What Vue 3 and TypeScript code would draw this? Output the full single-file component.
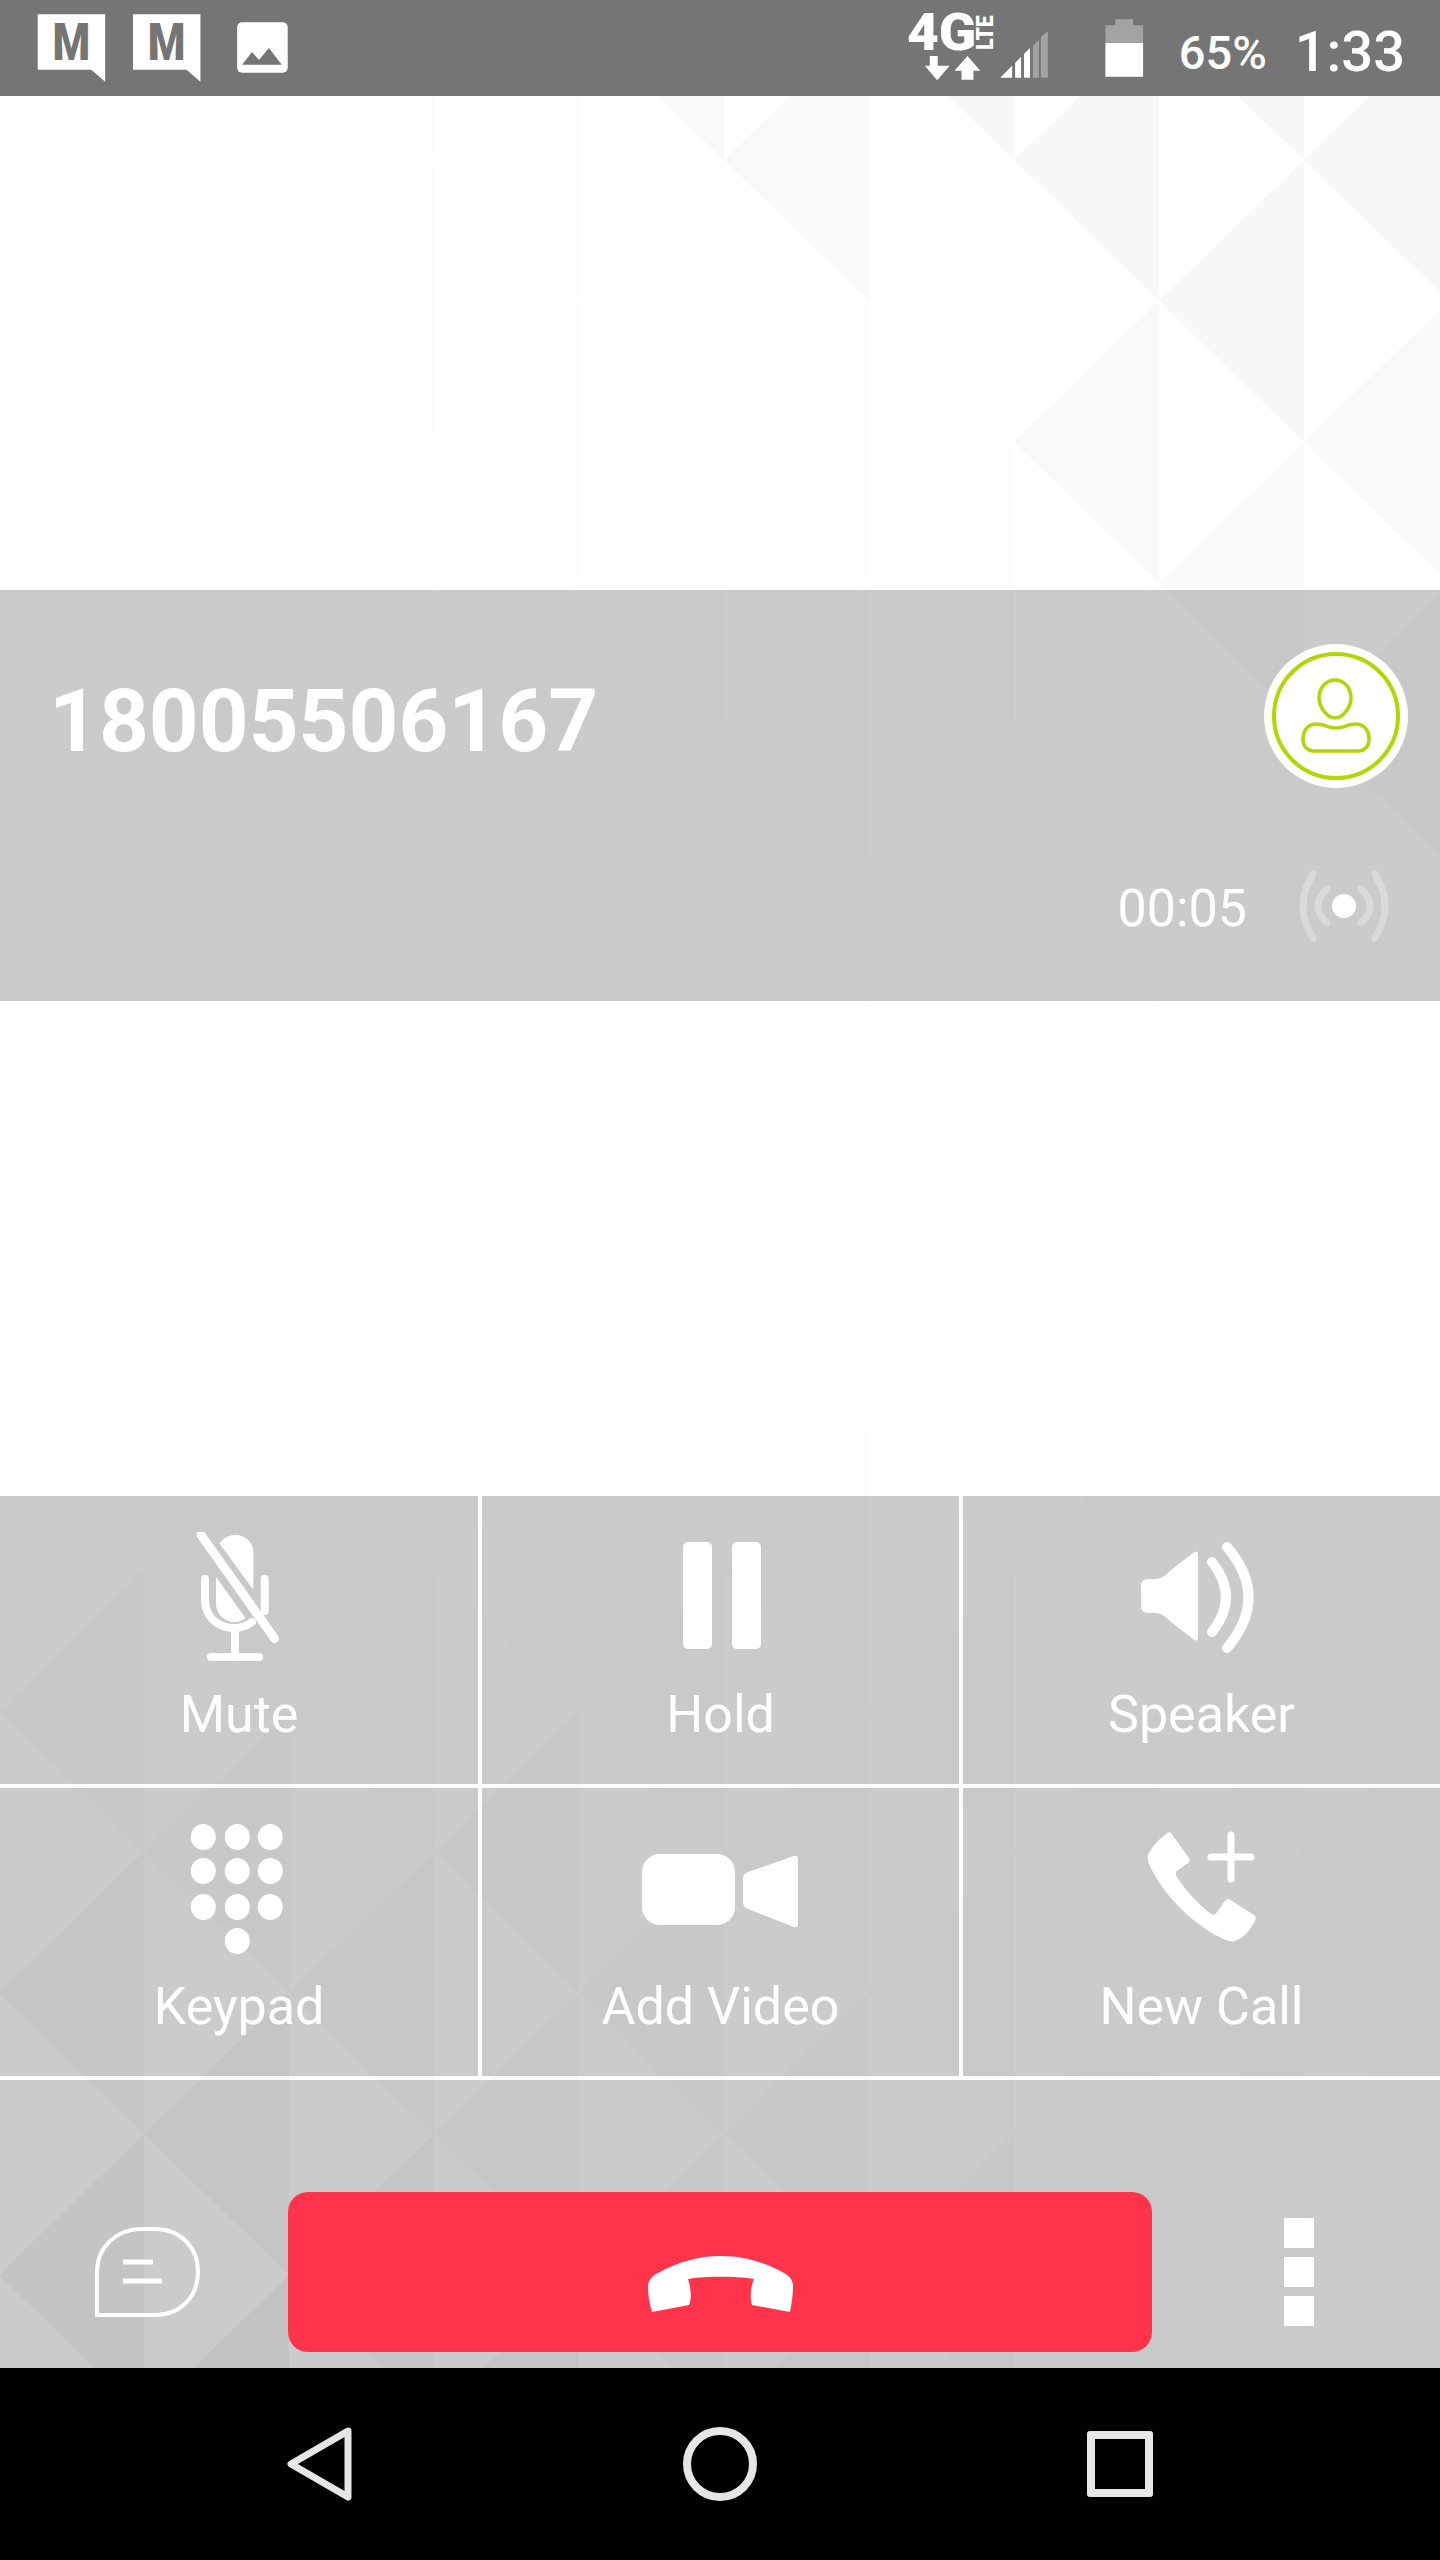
<template>
  <div class="phone">
    <svg class="pattern" width="1440" height="2560" viewBox="0 0 1440 2560">
      <polygon v-for="t in triangles" :key="t.id" :points="t.points" fill="#7d8799" :fill-opacity="t.alpha" />
    </svg>

    <header class="status">
      <svg class="status-left" width="300" height="96" viewBox="0 0 300 96">
        <g v-for="x in [38, 134]" :key="x" :transform="`translate(${x} 14)`">
          <polygon points="0,0 68,0 68,68 54,56 0,56" fill="#fff" />
          <text x="15" y="46" class="mail-m" textLength="38" lengthAdjust="spacingAndGlyphs">M</text>
        </g>
        <rect x="239" y="22" width="51" height="51" rx="5" fill="#fff" />
        <polygon points="244,65 254,52 261,60 271,48 284,65" fill="#757575" />
      </svg>
      <svg class="status-net" width="250" height="96" viewBox="0 0 250 96">
        <text x="6" y="50" class="net-4g" textLength="70" lengthAdjust="spacingAndGlyphs">4G</text>
        <text transform="translate(93 50) rotate(-90)" class="net-lte" textLength="35" lengthAdjust="spacingAndGlyphs">LTE</text>
        <polygon points="29,56 37,56 37,66 49,66 37,80 36,80 24,66 29,66" fill="#fff" />
        <polygon points="67,56 80,71 73,71 73,80 61,80 61,71 54,71" fill="#fff" />
        <polygon points="100,78 112,66 112,78" fill="#fff" />
        <polygon points="115,63 121,57 121,78 115,78" fill="#fff" />
        <polygon points="124,54 130,48 130,78 124,78" fill="#fff" />
        <polygon points="133,46 139,40 139,78 133,78" fill="#a3a3a3" />
        <polygon points="141,37 148,31 148,78 141,78" fill="#a3a3a3" />
        <path d="M216 19H234V25H244V43H206V25H216Z" fill="#a3a3a3" />
        <rect x="206" y="43" width="38" height="34" fill="#fff" />
      </svg>
      <span class="status-pct">65%</span>
      <span class="status-time">1:33</span>
    </header>

    <div class="spacer"></div>

    <section class="call-panel">
      <div class="caller-row">
        <div class="caller-number">18005506167</div>
        <div class="avatar">
          <svg width="144" height="144" viewBox="0 0 144 144" fill="none" stroke="#b4d500">
            <circle cx="72" cy="72" r="62" stroke-width="4" />
            <path d="M71 36C80 36 87 44 87 54C87 63 79 74 71 74C63 74 55 63 55 54C55 44 62 36 71 36Z" stroke-width="3.5" />
            <path d="M39 95C39 85 45 80 53 80C59 80 65 84 72 84C79 84 85 80 91 80C99 80 105 85 105 95C105 103 100 107 94 107H50C44 107 39 103 39 95Z" stroke-width="3.5" />
          </svg>
        </div>
      </div>
      <div class="timer-row">
        <span class="timer">00:05</span>
        <svg width="96" height="80" viewBox="0 0 96 80" fill="none" stroke="#fff" stroke-opacity="0.3" stroke-linecap="round">
          <circle cx="48" cy="40" r="12" fill="#fff" stroke="none" />
          <path d="M31 23Q13 40 31 57M65 23Q83 40 65 57" stroke-width="7" />
          <path d="M17 8Q-3 40 17 72M79 8Q99 40 79 72" stroke-width="7" />
        </svg>
      </div>
    </section>

    <div class="spacer spacer--low"></div>

    <section class="actions">
      <button v-for="a in actions" :key="a.label" class="action">
        <svg class="action-icon" width="160" height="130" :viewBox="a.view" fill="#fff">
          <template v-if="a.label === 'Mute'">
            <path d="M45.5 11.5C49 6 55 3 62 3C72 3 79.4 11 79.4 21V58Z" />
            <path d="M42 45L71.5 86C68 89 65 90 61 90C50 90 42 82 42 71Z" />
            <g fill="none" stroke="#fff" stroke-width="8">
              <path d="M31 47V68C31 85 44 96 60 96C66 96 73 94 78 90" stroke-linecap="round" />
              <path d="M90.7 47V79" stroke-linecap="round" />
              <path d="M61 96V124" />
              <path d="M37 125H85" stroke-linecap="round" />
            </g>
            <path d="M27 3L100.6 106.5" stroke="#fff" stroke-width="9" stroke-linecap="round" />
          </template>
          <template v-else-if="a.label === 'Hold'">
            <rect x="27" y="10" width="29" height="107" rx="5" />
            <rect x="76" y="10" width="29" height="107" rx="5" />
          </template>
          <template v-else-if="a.label === 'Speaker'">
            <path d="M11 47H18C25 47 29 43 34 38L56 21Q61 17 61 23V105Q61 111 56 107L34 90C29 85 25 81 18 81H11Q4 81 4 74V54Q4 47 11 47Z" />
            <path d="M75 30Q103 65 75 100M90 15Q133 65 90 116" fill="none" stroke="#fff" stroke-width="10" stroke-linecap="round" />
          </template>
          <template v-else-if="a.label === 'Keypad'">
            <ellipse v-for="(d, i) in keypadDots" :key="i" :cx="d[0]" :cy="d[1]" rx="12.5" ry="13" />
          </template>
          <template v-else-if="a.label === 'Add Video'">
            <rect x="1" y="30" width="93" height="71" rx="18" />
            <path d="M102 55Q102 50 107 48L153 32Q157 31 157 35V100Q157 104 153 103L107 85Q102 83 102 78Z" />
          </template>
          <template v-else>
            <path d="M34 9L52 34Q54 37 51 39L41 46Q37 49 40 53C48 66 62 81 74 90Q78 92 80 88L88 77Q91 73 95 77L117 91Q120 94 118 97C113 107 106 114 98 117Q95 118 92 117C70 110 30 80 12 40Q9 32 13 27C18 19 24 14 29 10Q32 7 34 9Z" />
            <path d="M74 33H114M94 11V55" fill="none" stroke="#fff" stroke-width="7" stroke-linecap="round" />
          </template>
        </svg>
        <span class="action-label">{{ a.label }}</span>
      </button>
    </section>

    <section class="call-bar">
      <div class="call-side">
        <svg width="105" height="90" viewBox="0 0 105 90" fill="none" stroke="#fff" stroke-width="4">
          <path d="M2 88V45C2 20 22 2 46 2H60C85 2 103 20 103 45C103 70 85 88 60 88Z" />
          <path d="M28 35H58M28 54H67" stroke-width="5" />
        </svg>
      </div>
      <button class="hangup">
        <svg width="146" height="58" viewBox="0 0 146 58">
          <path d="M4 56C1 46 0 38 0 30C0 25 4 20 10 17C30 6 50 0 73 0C96 0 116 6 136 17C142 20 145 25 145 30C145 38 144 46 142 56L104 49C102 42 102 33 106 23C95 21 85 20.7 73 20.7C61 20.7 51 21 40 23C43 33 44 42 41 49Z" fill="#fff" />
        </svg>
      </button>
      <div class="call-side">
        <div class="more">
          <i></i><i></i><i></i>
        </div>
      </div>
    </section>

    <nav class="nav">
      <div class="nav-slot">
        <svg width="66" height="74" viewBox="0 0 66 74" fill="none" stroke="#e6e6e6" stroke-width="7" stroke-linejoin="round">
          <path d="M61 4L4 37L61 70Z" />
        </svg>
      </div>
      <div class="nav-slot">
        <svg width="74" height="74" viewBox="0 0 74 74" fill="none" stroke="#e6e6e6" stroke-width="8">
          <circle cx="37" cy="37" r="33" />
        </svg>
      </div>
      <div class="nav-slot">
        <div class="nav-square"></div>
      </div>
    </nav>
  </div>
</template>

<script setup lang="ts">
interface Tri {
  id: string
  points: string
  alpha: number
}

const STEP_X = 145
const STEP_Y = 141

const nodeX = (k: number) => STEP_X * k - 1
const nodeY = (j: number) => 160 + STEP_Y * j

// background is a faint tessellation, stronger top right and bottom left
const shadeAt = (x: number, y: number, k: number, j: number) => {
  const topRight = Math.max(0, (x - 100) / 1340) * Math.max(0, 1 - y / 1000)
  const lowLeft = Math.max(0, 1 - x / 1500) * Math.max(0, (y - 1300) / 900)
  const midRight = Math.max(0, (x - 1000) / 440) * Math.max(0, 1 - Math.abs(y - 1250) / 350)
  const noise = 0.75 + (((k * 7 + j * 13) % 5) + 5) % 5 * 0.12
  return (topRight * 0.08 + lowLeft * 0.06 + midRight * 0.015 + 0.004) * noise
}

const triangles: Tri[] = []
for (let k = 0; k <= 11; k++) {
  for (let j = -2; j <= 17; j++) {
    if ((k + j) % 2 === 0) continue
    if (k === 7 && j === 0) continue
    const x = nodeX(k)
    const cx = x - STEP_X / 3
    const cy = nodeY(j + 1)
    triangles.push({
      id: `${k}_${j}`,
      points: `${x},${nodeY(j)} ${x},${nodeY(j + 2)} ${nodeX(k - 1)},${cy}`,
      alpha: shadeAt(cx, cy, k, j)
    })
  }
}

const actions = [
  { label: 'Mute', view: '-15 0 160 130' },
  { label: 'Hold', view: '-15 0 160 130' },
  { label: 'Speaker', view: '-15 0 160 130' },
  { label: 'Keypad', view: '-15 0 160 130' },
  { label: 'Add Video', view: '0 0 160 130' },
  { label: 'New Call', view: '-15 0 160 130' }
]

const keypadDots: number[][] = []
for (const y of [13, 47, 83]) {
  for (const x of [29.3, 63.3, 96.3]) keypadDots.push([x, y])
}
keypadDots.push([63.3, 117])
</script>

<style>
html,
body {
  margin: 0;
  background: #fff;
}
</style>

<style scoped>
.phone {
  position: relative;
  display: flex;
  flex-direction: column;
  width: 1440px;
  height: 2560px;
  overflow: hidden;
  background: #fff;
  color: #fff;
  font-family: Roboto, "Liberation Sans", sans-serif;
}

.pattern {
  position: absolute;
  top: 0;
  left: 0;
}

.status,
.spacer,
.call-panel,
.actions,
.call-bar,
.nav {
  position: relative;
}

.status {
  display: flex;
  flex: none;
  align-items: flex-start;
  height: 96px;
  padding-right: 35px;
  background: #757575;
}

.status svg {
  display: block;
}

.status-net {
  margin-left: 603px;
}

.mail-m {
  font-size: 52px;
  font-weight: 900;
  fill: #757575;
}

.net-4g {
  font-size: 52px;
  font-weight: 900;
  fill: #fff;
}

.net-lte {
  font-size: 24px;
  font-weight: 900;
  fill: #fff;
}

.status-pct {
  margin-top: 26px;
  margin-left: 30px;
  font-size: 47px;
  font-weight: 500;
  line-height: 54px;
}

.status-time {
  margin-top: 20px;
  margin-left: 28px;
  font-size: 56px;
  font-weight: 500;
  line-height: 64px;
}

.spacer {
  flex: none;
  height: 494px;
}

.spacer--low {
  height: 495px;
}

.call-panel {
  flex: none;
  height: 411px;
  box-sizing: border-box;
  padding: 54px 0 0 49px;
  background: rgba(0, 0, 0, 0.205);
}

.caller-row {
  display: flex;
  align-items: center;
  justify-content: space-between;
  padding-right: 32px;
}

.caller-number {
  margin-top: 10px;
  font-size: 87px;
  font-weight: 700;
  line-height: 104px;
}

.avatar {
  width: 144px;
  height: 144px;
  border-radius: 50%;
  background: #fff;
}

.avatar svg {
  display: block;
}

.timer-row {
  display: flex;
  align-items: center;
  justify-content: flex-end;
  gap: 49px;
  margin-top: 78px;
  padding-right: 48px;
}

.timer {
  margin-top: 5px;
  font-size: 52px;
  font-weight: 400;
  line-height: 60px;
}

.actions {
  display: grid;
  flex: none;
  grid-template-columns: 478px 477px 477px;
  grid-auto-rows: 288px;
  gap: 4px;
  padding-bottom: 4px;
}

.action {
  display: flex;
  flex-direction: column;
  align-items: center;
  padding: 36px 0 0;
  border: 0;
  background: rgba(0, 0, 0, 0.205);
  color: inherit;
  font: inherit;
}

.action-icon {
  display: block;
  flex: none;
}

.action-label {
  margin-top: 23px;
  font-size: 52px;
  font-weight: 400;
  line-height: 60px;
}

.call-bar {
  display: flex;
  flex: none;
  align-items: center;
  box-sizing: border-box;
  height: 288px;
  padding: 112px 0 16px;
  background: rgba(0, 0, 0, 0.205);
}

.call-side {
  display: flex;
  flex: none;
  align-items: center;
  justify-content: center;
  width: 288px;
}

.call-side svg {
  display: block;
  margin-left: 7px;
}

.hangup {
  display: flex;
  align-items: center;
  justify-content: center;
  flex: 1;
  height: 160px;
  padding: 26px 0 0 2px;
  border: 0;
  border-radius: 20px;
  background: #ff344a;
}

.more {
  display: flex;
  flex-direction: column;
  gap: 9px;
  margin-left: 6px;
}

.more i {
  display: block;
  width: 30px;
  height: 30px;
  background: #fff;
}

.nav {
  display: flex;
  flex: none;
  height: 192px;
  padding: 0 120px;
  background: #000;
}

.nav-slot {
  display: flex;
  flex: 1;
  align-items: center;
  justify-content: center;
}

.nav-slot svg {
  display: block;
}

.nav-square {
  box-sizing: border-box;
  width: 66px;
  height: 66px;
  border: 8px solid #e6e6e6;
  border-radius: 3px;
}
</style>
